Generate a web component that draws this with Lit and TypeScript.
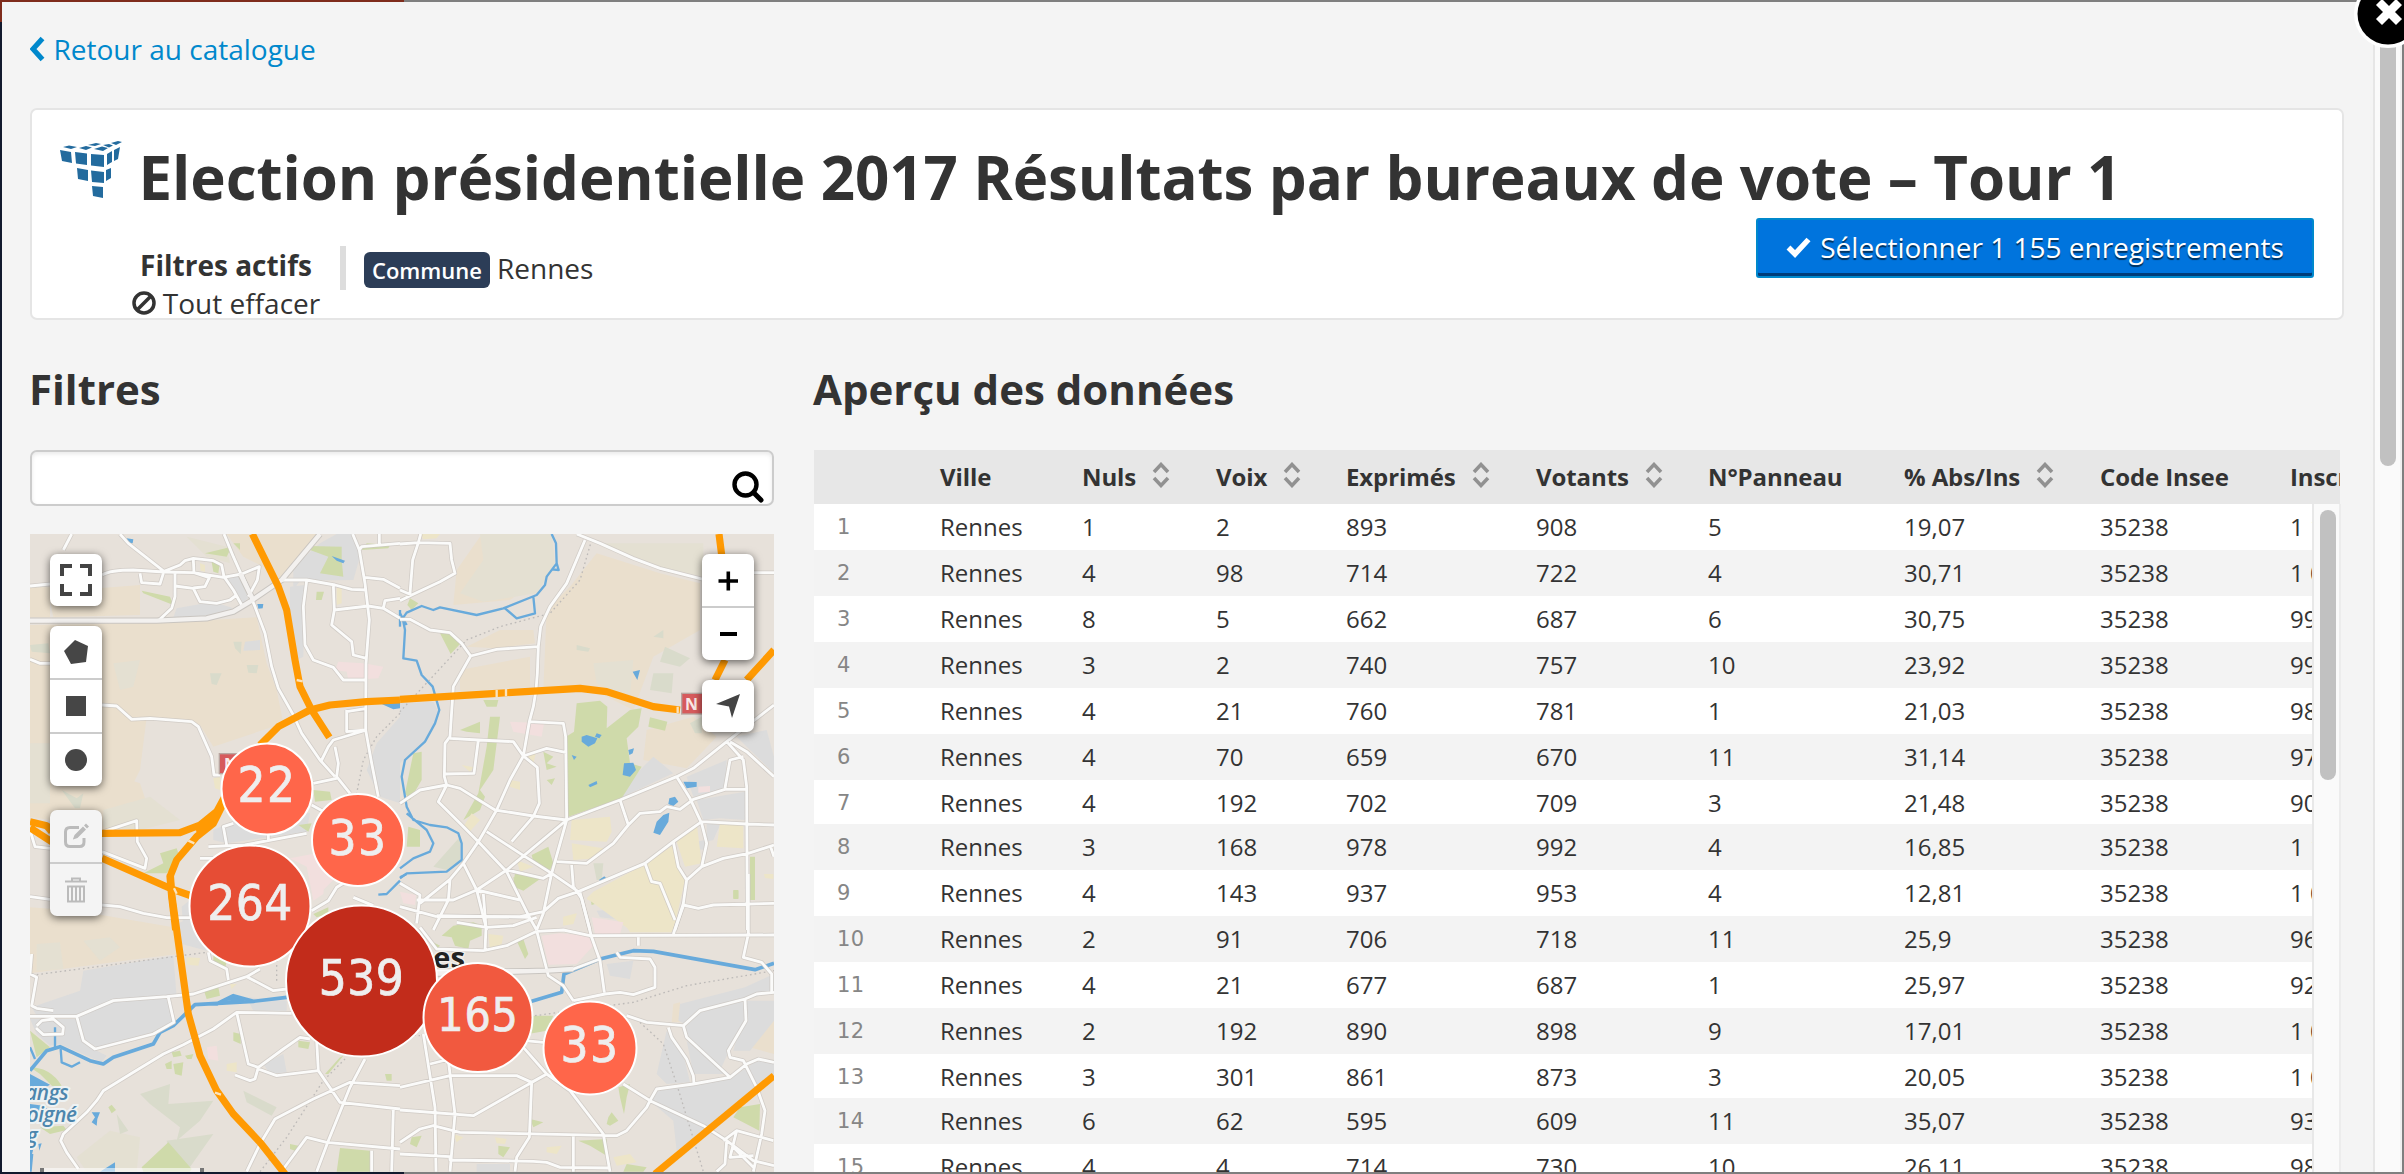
import { LitElement, html, svg, css } from "lit";
import { customElement } from "lit/decorators.js";

/* Map geometry is kept in four quadrants, drawn at three units per pixel. */
type Quad = [string, string, string, string];
const OFFSETS = ["translate(0 0)", "translate(1200 0)", "translate(0 1032)", "translate(1200 1032)"];

const ROADS: Quad = [
  `M215 12L190 60M360 12L385 40L492 124M90 168L150 162M306 135Q330 120 400 120L492 126L580 128L670 142L725 132L778 110L772 150L745 200
   M492 124L540 105L555 92L580 85L640 92L665 105L672 140L700 180L725 225M420 130L425 158L480 162L490 130M525 130V200L515 235L475 272
   M525 168L580 175L600 215L650 220L690 210L710 195M580 90L582 128L628 143L615 170L580 174
   M672 12L700 80L740 170L765 230L795 310L815 410L835 475L880 555L905 610L960 690L1005 740M725 132L760 215
   M845 150H920L1005 165L1055 178L1100 180M920 152L910 230L915 345L940 390L1000 412L1030 450L1100 450
   M1058 12L1078 60L1095 160L1108 270L1098 400L1097 600L1115 700L1135 800M1078 60L1085 50L1200 40M1095 142L1150 148L1200 175M1138 12V45
   M1000 165L1003 240L1105 228L1150 235L1200 265M1003 240L995 285L1055 335L1060 375L1100 385M1150 235L1155 212L1200 205
   M90 388L120 400H150M306 525L350 528L395 568L450 565L575 575L595 590L635 680L642 735H660
   M1040 540V605L1100 600M1040 545L1100 535M1100 600L1000 630L985 650L965 690M1005 650L1015 700L1010 740L1050 790M940 760L1010 745
   M935 825L980 850M310 905L410 872L412 935L440 985L435 1015L306 965M90 900L105 950L150 955M680 945L670 890L700 880
   M625 950L735 945L920 910M805 910V930M90 1100L150 1108M306 1125L360 1130L430 1150L500 1163H570M600 985H640`,
  `M0 42L55 38L150 40L155 90L165 130L120 155L35 195L0 212M62 12L55 38L38 90L30 190M0 180L35 195M530 12L600 40L700 85L780 115L910 148M1062 128H1122
   M555 30L500 160L450 230L422 290L415 350L412 430L408 480L400 530L388 575L370 678
   M0 268H30L90 300L150 308L185 340L212 378L160 470L150 620L135 640L133 740L140 765M212 378L290 358L415 350
   M150 625L235 630L340 635L370 678L330 750L290 840L235 935L190 1000L150 1048L60 1120M235 630L222 730L135 732
   M388 575L490 580L497 620L500 870M370 678L440 655L500 668M370 678L412 712L418 820L400 860L335 935
   M0 820L60 780L140 765L180 775L285 840L400 858L500 870M140 765L115 815L180 880L235 935L320 1025L390 1165L410 1200
   M500 870L660 810L830 740L880 715L980 635L1122 525M500 870L320 1020L230 1080L160 1110H50M500 870L455 1030L430 1150L410 1200
   M260 905L360 970L455 1030L535 1085L735 1000L820 935L905 875L1040 882L1122 885M660 810L685 885L640 940L560 1000L470 995
   M685 885L720 850L780 845L800 830L840 838L880 808L975 778H1040M830 740L870 805L905 880L920 940L905 1010L860 1050L850 1120L825 1200
   M820 935L835 1010L860 1050M905 1010L970 985L1045 970L1122 945M735 1000L755 1055L780 1060L825 1170
   M980 635L1030 690L1040 770L1042 1200M990 635L1040 665L1122 740M1030 680L990 690L975 775M850 1125L895 1135L940 1125L1122 1120
   M320 1020L430 1045L455 1030M515 1005L520 1070L545 1105L570 1200M535 1085L475 1105L430 1145L360 1160H110M190 1000L230 1080L260 1200
   M230 1080L360 1110M150 1048L145 1110L120 1160L100 1200M0 1060L60 1095L50 1180M0 1130L110 1160M1110 945L1122 980`,
  `M95 240L90 300L110 310L95 395L110 403L160 410M90 427H230L340 380L500 368L580 360L740 308L780 285M230 427L250 500L285 525L460 480L522 445L505 370
   M110 455L125 440L160 435L190 460L188 480L130 482L108 462M875 418L710 415L640 465L550 512L490 540L400 595L310 650L290 680L260 715L190 780L182 800L200 835L235 885
   M710 415L745 570L775 580L765 615L750 620L705 603M775 580L850 525L900 490L930 495M775 585L830 605L955 590L950 500M955 590L1020 685L1200 705
   M625 235L630 260L680 285L685 318M740 308L820 350L860 345M1095 555L1050 640L985 800L950 893
   M1200 635L1050 625L940 675L825 735L780 810L740 893M850 885L920 790L980 805L1200 825M1180 705L1175 893M1115 830V893
   M935 110L985 80L1010 40L1060 10M1060 70L1120 95`,
  `M0 640L150 605H350L395 625L440 600M70 480L105 700L108 893M120 460L145 560L165 720L150 893M90 570L150 555
   M0 708L220 725L440 600M395 625L388 790L350 850L345 893M370 520L440 600L510 650L610 780L630 893
   M0 805L60 765L100 755L180 775L650 785L680 770L740 700L750 680L770 645L880 630L990 610L1040 570L1075 555L1122 565
   M0 840L150 848L150 858L400 862L440 865L480 880L630 882M520 780V893M670 630L750 680L910 755L980 800L1060 860L1122 875
   M680 425L740 445L850 455L900 410L1035 375L1070 360L1122 355M850 455L860 490L990 610M805 460L815 490L860 555L880 605L882 630
   M1035 375L1038 440L985 530L990 550L1030 560L1070 640L1095 710L1085 780L1060 893M375 500L430 505
   M410 170L445 305L490 335L520 380M410 172L490 168L570 185L1122 183M540 55L575 190L600 260L613 355
   M520 380L615 360L660 355L700 362L765 340V280L750 255L660 250L650 235M715 190V215M1045 0V180L1030 250L1085 265L1115 300V355
   M250 60L258 160L255 230M110 125L390 130M170 145L260 160L340 155L410 130M60 160L110 225L250 230L320 215L410 172
   M110 290H440L520 285L600 255M850 95L820 180M970 800L1010 770L1120 800M1010 770L990 850L1060 845M980 800L975 870L950 893M1060 880L1000 820`,
];

const TRUNK: Quad = [
  `M90 272H470L620 265L700 245L750 215L845 150L960 12M757 205L720 130`,
  ``,
  ``,
  `M70 300L440 290L520 285`,
];

const MOTORWAY: Quad = [
  `M757 12L835 170L860 240L885 390L900 470L935 540L988 622M1200 510L1100 515L990 525L930 540L835 590L780 645
   M680 790L650 845L600 885L540 908L306 910M680 800L640 880L590 920L530 990L510 1040L515 1100L527 1200
   M90 875L140 887L155 905M90 893L155 935M306 985L510 1075L575 1098M650 850L595 910`,
  `M0 508L290 490L540 475L620 485L760 530L840 540M957 12L965 75M975 390L945 450M1122 360L1040 450`,
  `M511 0L515 60L540 240L565 420L600 545L650 650L700 720L780 805L855 900`,
  `M1122 605L765 900`,
];

const WATER_LINES: Quad = [
  `M1200 240V290`,
  `M455 12L468 40L470 100L440 140L435 165L410 195L310 235L230 255L120 232L100 240L65 228L20 248L8 265L15 300L10 385L50 392L65 435L98 470L118 540L105 580L75 635L15 690L5 740L20 830L40 870L90 885L140 892L175 910L185 940V990L140 1025L20 1030L0 1045
   M20 850L80 900L100 940L90 965L40 985L0 1015M400 200L405 250L350 265L315 235M470 100L476 120L455 118M0 250L20 285`,
  `M1200 20L1160 60L1135 62M182 525L185 565L215 578L240 565M165 460V520M90 520L105 555`,
  `M0 10L20 0M600 20L615 10`,
];

const CANALS: Quad = [
  ``,
  ``,
  `M860 370L760 382L585 392L520 455L480 475L460 510L340 550L310 570L270 560L180 518L140 530L90 590M650 390L700 365L760 382`,
  `M395 382L485 355L492 300L600 255L700 230L760 232L1065 287L1122 268`,
];

const LAKES: Quad = [
  `M380 25L400 28L398 40L385 38ZM772 222L790 222L788 235L775 236ZM995 78L1035 92L1030 100L1010 92ZM1145 522L1200 515V535L1180 538Z`,
  `M545 620L560 615L592 625L585 640L565 650L545 635ZM590 610L605 615L598 625L585 620ZM685 660L702 655L698 670L688 675ZM672 700L700 698L708 720L690 740L668 735ZM565 765L590 753L592 762L570 772ZM515 675L530 680L522 690ZM850 755L890 756V770L860 775ZM808 805L825 800L835 815L820 828L805 822ZM790 855L808 848L805 875L780 915L760 908L770 875ZM698 425L720 420L712 450L705 438ZM598 1050L615 1040L618 1045L602 1056Z`,
  `M90 600L150 632L120 650L90 645ZM275 715L300 715L292 735L290 755L275 745L285 730ZM90 800L100 825L90 865ZM115 810L125 808L118 830ZM345 865V893H300ZM90 840H100L95 893H90ZM660 380L700 362L740 382Z M90 690L130 695L150 710L90 715Z`,
  ``,
];

interface Area { fill: string; d: Quad }
const AREAS: Area[] = [
  { fill: "#eadfcd", d: [
    `M680 12H950L840 145L790 110L730 80ZM90 172H150V262H90ZM230 180L420 165L420 255L160 262L150 210ZM90 285L500 278L770 262L800 400L830 480L850 580L640 650L600 585L440 562L420 720L330 900L90 860ZM300 720L420 760L460 880L330 895Z`,
    `M240 20L450 30L440 130L330 210L160 225L170 120ZM590 70L780 130L900 160V300L760 380L700 540L560 470L430 480L440 240L510 170ZM740 600L880 560L950 620L860 715L730 690ZM200 350L300 300H400L405 340L290 355ZM180 420L390 380V470L180 485Z`,
    `M90 100L230 110L520 160L535 240L390 258L90 298Z`,
    `M820 390L840 385V445H815ZM1075 420L1122 415V540L1050 520Z`] },
  { fill: "#e4e0d2", d: [
    `M560 20L680 50L690 100L620 80ZM340 400L420 390L400 470L360 480Z M90 640H150V820H90ZM310 840L450 800L540 870L420 900L310 890Z`,
    `M240 12H455L465 100L410 190L250 215L180 190L250 90ZM600 40H910V140L780 110ZM580 400L700 390L690 500L590 460Z`,
    `M110 210L180 205L190 285L110 290ZM250 200L330 190L360 220L300 260ZM230 850L330 770L420 790L410 893H260Z`,
    ``] },
  { fill: "#d9dbcb", d: [
    `M630 430L665 430L650 465L635 462ZM740 405L775 405L770 430L745 428ZM90 345L145 340L150 370L95 365ZM700 335L725 335L722 372L705 355ZM185 780L230 805L250 790L240 835L225 835Z`,
    `M795 350L870 385L840 410L780 395ZM760 430L820 430L815 490L750 480ZM530 345L570 355L565 365L530 360ZM1000 250L1050 230L1040 290L1000 285ZM870 580L905 560V610L885 610ZM100 1010L180 920V990L140 1020ZM760 320L790 300V325ZM580 1000H610L605 1050H590Z`,
    `M420 660L510 630L505 690L640 680L600 740L530 800L540 760L450 690ZM730 650L830 700L815 725L740 685ZM350 720L385 770L360 780ZM500 800L640 780L560 893H520Z`,
    ``] },
  { fill: "#dcdcdc", d: [
    `M675 145L715 130L745 205L720 225ZM880 110L960 40L1010 12H1060L1080 80L1060 150L900 152L880 180ZM870 170L915 165L910 380L890 390L870 250ZM530 235L640 215L700 235L600 262L520 262ZM735 335L780 330V360L730 362ZM1130 640L1200 560V820L1140 800L1100 720ZM640 900L800 830L930 850L920 905L680 940L640 930ZM545 1130L570 1110V1200H550Z`,
    `M0 520L100 515L115 545L100 590L70 635L10 690L0 700ZM760 680L820 730L660 805L700 740ZM860 740L980 690L975 775L880 800ZM890 810L1035 785V870L960 865L910 870ZM1010 620L1100 600L1122 680V730L1050 660ZM920 880L960 885L940 930L920 935ZM865 940L915 930V960L870 955Z`,
    `M250 290L520 245L530 370L340 375L235 425L110 425L95 400L240 350ZM235 430L340 385L500 372L520 440L460 475L290 520L255 500ZM530 150L600 120L620 230L545 210ZM790 570L850 540L860 595L810 600ZM90 435H230L248 500L280 525L320 545L305 565L180 510L150 515L110 480ZM740 370L860 380V410H760Z`,
    `M840 390L1035 340L1122 300V355L1040 375L905 410L855 450L835 440ZM855 460L900 415L1035 380L1035 440L985 535L960 590L865 490ZM800 470L850 540L870 625L800 630L770 600ZM770 650L990 615L1070 560L1122 565V600L890 790L830 830L820 740L750 680ZM1040 380H1122V440L1050 530H1000ZM620 270L700 260L690 315L630 305ZM590 110L660 105L690 140L600 130ZM230 870H330V893H230ZM860 500L990 600H880Z`] },
  { fill: "#cfdaaa", d: [
    `M615 70L695 50L680 80ZM635 95H660L655 130L640 125ZM425 182L510 200L520 225L430 190ZM925 48L1025 50V90L1030 140L960 130L985 80L930 60ZM950 185H972L965 210H948ZM1085 60L1100 40L1170 45L1165 55ZM940 780L990 785L995 810L945 815ZM480 970L530 955L540 985L500 1030L430 1030L490 1000ZM895 885L935 880L925 905ZM700 40H720V60Z`,
    `M120 310L150 308L180 342L152 372ZM530 520L600 512L622 530L620 595L690 540L725 535L715 590L680 625L690 700L725 710L665 805L505 860L498 620L522 605ZM750 562L802 575L795 602L745 590ZM270 560H300L280 720L240 780L255 800L240 840L190 870L235 790L260 650ZM40 670L65 665V750L30 810L15 790ZM250 510H295L290 530H260ZM180 600L240 575V610L200 605ZM30 205L55 220L35 240L22 225ZM395 975L445 950L460 1000L450 1020L400 995ZM345 1030L420 1045L370 1080L340 1060ZM1050 980H1065V1110H1050ZM1000 1080H1015V1105H1000ZM25 890L60 900V950L20 950ZM570 1100L585 1095L592 1120L575 1125ZM600 1080L612 1078L620 1095L608 1100ZM430 665L460 680L440 700L470 710L440 720ZM440 750L465 745L455 765Z`,
    `M612 350L655 340L660 365L620 375ZM700 475L722 480V510L700 500ZM515 535L540 530L545 545L520 550ZM555 545L580 540L575 555L562 555ZM495 570L515 560V585L500 585ZM520 570L550 565L545 605L525 600ZM90 580Q150 580 185 635L160 640L120 600ZM505 805L575 885L570 893H430L425 880ZM90 470L150 520L110 550ZM1020 822L1110 830V893H1010ZM325 700L335 692L348 708L335 718ZM895 500L930 505L925 525L895 520ZM975 600L1020 550L1030 545L985 600ZM1155 600H1175V620H1160ZM640 240L680 260L675 285L640 265ZM940 120L985 100V120L950 130ZM870 810L895 815L885 830L870 825Z M120 760L190 755L200 768L150 780Z`,
    `M160 155L220 145L245 155V185L210 200L205 225L165 215L155 190L125 185ZM340 10L420 15L370 50L345 40ZM350 200L370 195L385 240L375 255ZM400 425L460 425L440 470L385 480ZM655 640L690 630L680 670L672 720L660 670ZM625 730L635 715L655 740L630 755L620 750ZM390 735L430 745L400 760ZM535 800L620 795V845L570 815ZM35 790L65 785L50 820L30 810ZM1020 700L1080 690L1078 770L1000 730ZM680 870L740 880L730 893H670ZM295 815L330 820L310 850L295 840ZM1050 0H1065V75H1050ZM1000 50H1015V75H1000ZM100 205L120 215L110 225Z`] },
  { fill: "#ede5c8", d: [
    `M1010 175L1025 172V220L1010 225ZM600 100L615 105V125L602 122ZM640 745L660 740V780L645 775Z`,
    `M60 12H120L110 25L70 28ZM515 870L630 860L635 905L620 935L510 930ZM515 940L580 950L610 955L590 985L520 990ZM740 1000L820 945L835 1015L855 1050L830 1160L820 1200H690L560 1105L580 1085ZM830 935L890 880L905 1000L855 1010ZM960 880L1030 885V955L950 950ZM330 750L360 755V780L330 770ZM350 990L400 1010L360 1025ZM215 850L240 870L205 910L190 890ZM185 705L220 712L210 725ZM490 1160L530 1150L520 1180L490 1185ZM380 675L410 660L400 700Z`,
    `M560 250L600 252L595 275L560 272ZM680 570L710 565V595L680 590ZM690 330H710L695 345Z`,
    `M560 75L730 5L745 25L780 30L825 140L815 175H690L650 110L570 80ZM265 180L310 185L305 210L270 230ZM490 130L530 120L520 150L490 155ZM640 850L690 840L710 865L650 875ZM440 820L485 815L470 840L440 835ZM285 790L320 795L315 810L290 808ZM160 780L190 790L170 805ZM1092 0H1120V15L1095 12Z`] },
  { fill: "#f2dfde", d: [
    `M1015 395L1090 400L1150 410L1135 445L1045 450L1040 425L1005 420ZM870 985L1000 960V1050L940 1110L920 1010Z`,
    `M330 575L432 580L425 620L340 605ZM895 770L930 768L930 785L895 788ZM0 1085L48 1095L45 1125L10 1120Z`,
    `M620 520L650 515L655 560L625 555ZM930 0H975L970 60L940 80Z`,
    `M425 185L480 178L565 185L580 215L530 270L445 272ZM575 130L670 145L660 180H585Z`] },
];

const RAILS: Quad = [
  `M1200 550L1130 620L1090 690L1070 790`,
  `M575 30L540 150L450 250L300 290L200 330L0 545M0 30`,
  `M110 302L390 265L620 235M830 320V260M780 893L860 790L970 620L1040 550`,
  `M405 425L700 385L860 335L1122 290M720 445L790 510L830 630L910 893M0 480L60 485`,
];

interface Cluster { x: number; y: number; r: number; n: string; c: string; size: number; dy: number; sp: number }
const CLUSTERS: Cluster[] = [
  { x: 267, y: 789, r: 46.5, n: "22", c: "#ff664a", size: 49, dy: -4.500, sp: 1.4 },
  { x: 358, y: 840, r: 47, n: "33", c: "#ff664a", size: 49, dy: -3, sp: 1.4 },
  { x: 250, y: 906, r: 61.5, n: "264", c: "#e64d35", size: 49, dy: -3.500, sp: 0.4 },
  { x: 361.5, y: 981, r: 76.5, n: "539", c: "#c22c1b", size: 49, dy: -3.500, sp: 0.4 },
  { x: 478, y: 1017.5, r: 55.5, n: "165", c: "#f1593f", size: 46, dy: -3, sp: 0.8 },
  { x: 590, y: 1048, r: 47.5, n: "33", c: "#ff664a", size: 49, dy: -3.500, sp: 1.4 },
];

const quad = (d: Quad, cls: string, fill?: string) =>
  d.map((p, i) => (p ? svg`<path class=${cls} transform=${OFFSETS[i]} fill=${fill ?? "none"} d=${p}></path>` : null));

@customElement("geo-map")
class GeoMap extends LitElement {
  static styles = css`
    :host { display: block; position: relative; height: 638px; overflow: hidden; background: #e7e1da; }
    .canvas { display: block; width: 744px; height: 638px; }
    .casing, .road, .trunk, .trunk-casing, .motor, .river, .canal, .rail { stroke-linejoin: round; }
    .casing { stroke: #cbc6c0; stroke-width: 13; opacity: .8; }
    .road { stroke: #fbfbfa; stroke-width: 8.5; }
    .trunk-casing { stroke: #c9c5c0; stroke-width: 19; }
    .trunk { stroke: #f3f1ef; stroke-width: 13; }
    .motor { stroke: #ff9a03; stroke-width: 21.5; }
    .river { stroke: #68aadb; stroke-width: 7; }
    .canal { stroke: #68aadb; stroke-width: 11; }
    .rail { stroke: #bdbab8; stroke-width: 4; stroke-dasharray: 5 9; }
    .city { font: 700 88px "Open Sans", sans-serif; fill: #222; stroke: #f2efec; stroke-width: 8; paint-order: stroke; }
    .lake { font: italic 600 62px "Open Sans", sans-serif; letter-spacing: -1px; fill: #4d86ad; stroke: #eef2f3; stroke-width: 12; paint-order: stroke; }
    .shield { font: 700 48px "Open Sans", sans-serif; fill: #f9e9e6; }
    .count { font-family: "DejaVu Sans Condensed", "DejaVu Sans", sans-serif; font-stretch: condensed; fill: #eee; stroke: #eee; stroke-width: .7; text-anchor: middle; }
    .bar { position: absolute; width: 52px; border-radius: 7px; background: #fff; box-shadow: 0 2px 9px rgba(0,0,0,.6); overflow: hidden; }
    .bar svg { display: block; width: 52px; height: 52px; }
    .bar svg + svg { border-top: 2px solid #ccc; }
    .full { left: 20px; top: 20px; }
    .draw { left: 20px; top: 92px; }
    .edit { left: 20px; top: 276px; background: #f4f4f4; }
    .zoom { left: 672px; top: 20px; }
    .locate { left: 672px; top: 146px; }
    .scale { position: absolute; left: 10px; top: 634px; width: 156px; height: 20px; border: 4px solid #777; border-top: 0; background: rgba(255,255,255,.55); }
  `;
  render() {
    return html`
      <svg class="canvas" viewBox="90 12 2232 1914">
        ${AREAS.map((a) => quad(a.d, "area", a.fill))}
        ${quad(LAKES, "lakes", "#68aadb")}
        ${quad(WATER_LINES, "river")} ${quad(CANALS, "canal")} ${quad(RAILS, "rail")}
        ${quad(ROADS, "casing")} ${quad(TRUNK, "trunk-casing")}
        ${quad(ROADS, "road")} ${quad(TRUNK, "trunk")} ${quad(MOTORWAY, "motor")}
        <rect x="2045" y="490" width="64" height="62" fill="#d65a5c" stroke="#b9a5a0" stroke-width="4"></rect>
        <text class="shield" x="2055" y="540">N</text>
        <rect x="658" y="671" width="64" height="60" fill="#d65a5c" stroke="#b9a5a0" stroke-width="4"></rect>
        <text class="shield" x="672" y="719">N</text>
        <path d="M890 450l18 4M565 932l18 8M522 1075l8 16M645 1688l18 6M1490 479v22M1518 477v22M2033 530v20" stroke="#fbe3bd" stroke-width="7"></path>
        <text class="city" x="1395" y="1315" text-anchor="end">es</text>
        <text class="lake" x="205" y="1711" text-anchor="end">angs</text>
        <text class="lake" x="230" y="1777" text-anchor="end">oigné</text>
        <text class="lake" x="112" y="1839" text-anchor="end">g</text>
        <g transform="translate(0 -1590) scale(3)">
          ${CLUSTERS.map((k) => svg`
            <circle cx=${k.x} cy=${k.y} r=${k.r - 1} fill=${k.c} stroke="#fff" stroke-width="2"></circle>
            <text class="count" x=${k.x} y=${k.y + k.dy + k.size * 0.365} font-size=${k.size} letter-spacing=${k.sp}>${k.n}</text>`)}
        </g>
      </svg>
      <div class="bar full"><svg viewBox="0 0 52 52"><path d="M12 22V12H22M30 12H40V22M40 30V40H30M22 40H12V30" fill="none" stroke="#444" stroke-width="4"></path></svg></div>
      <div class="bar draw">
        <svg viewBox="0 0 52 52"><path d="M25 14L38 20L36 36L21 38L14 25Z" fill="#464646"></path></svg>
        <svg viewBox="0 0 52 52"><path d="M16 16H36V36H16Z" fill="#464646"></path></svg>
        <svg viewBox="0 0 52 52"><circle cx="26" cy="26" r="11" fill="#464646"></circle></svg>
      </div>
      <div class="bar edit">
        <svg viewBox="0 0 52 52"><path d="M29 17.500H20Q15.500 17.500 15.500 22V32Q15.500 36.500 20 36.500H29.500Q34 36.500 34 32V28" fill="none" stroke="#bbb" stroke-width="3"></path><path d="M23 29L24.500 25L33 16.500L36 19.500L27.500 28L23 29.500ZM34 15.500L36 13.500L39 16.500L37 18.500Z" fill="#bbb"></path></svg>
        <svg viewBox="0 0 52 52"><path d="M15 17.500H37M22 17V14.500H30V17M18 22.500H34V37.500H18ZM22 22V38M26 22V38M30 22V38" fill="none" stroke="#bbb" stroke-width="2"></path></svg>
      </div>
      <div class="bar zoom">
        <svg viewBox="0 0 52 52"><path d="M16.500 27H36M26.300 17.500V36.500" stroke="#000" stroke-width="3.600"></path></svg>
        <svg viewBox="0 0 52 52"><path d="M18 26H35" stroke="#000" stroke-width="4"></path></svg>
      </div>
      <div class="bar locate"><svg viewBox="0 0 52 52"><path d="M38 14L30 38L27 26.500L14 24Z" fill="#444"></path></svg></div>
      <div class="scale"></div>`;
  }
}

const COLUMNS: { label: string; sort?: boolean }[] = [
  { label: "Ville" }, { label: "Nuls", sort: true }, { label: "Voix", sort: true }, { label: "Exprimés", sort: true },
  { label: "Votants", sort: true }, { label: "N°Panneau" }, { label: "% Abs/Ins", sort: true }, { label: "Code Insee" }, { label: "Inscrits" },
];
const ROWS: string[][] = [
  ["1", "2", "893", "908", "5", "19,07", "1 122"],
  ["4", "98", "714", "722", "4", "30,71", "1 042"],
  ["8", "5", "662", "687", "6", "30,75", "992"],
  ["3", "2", "740", "757", "10", "23,92", "995"],
  ["4", "21", "760", "781", "1", "21,03", "989"],
  ["4", "70", "659", "670", "11", "31,14", "973"],
  ["4", "192", "702", "709", "3", "21,48", "903"],
  ["3", "168", "978", "992", "4", "16,85", "1 193"],
  ["4", "143", "937", "953", "4", "12,81", "1 093"],
  ["2", "91", "706", "718", "11", "25,9", "969"],
  ["4", "21", "677", "687", "1", "25,97", "928"],
  ["2", "192", "890", "898", "9", "17,01", "1 082"],
  ["3", "301", "861", "873", "3", "20,05", "1 092"],
  ["6", "62", "595", "609", "11", "35,07", "938"],
  ["4", "4", "714", "730", "10", "26,11", "988"],
];

@customElement("data-table")
class DataTable extends LitElement {
  static styles = css`
    :host { display: block; width: 1527px; font-size: 24px; color: #333; }
    .head, .row { display: grid; grid-template-columns: 103px 142px 134px 130px 190px 172px 196px 196px 190px 160px; padding-left: 23px; white-space: nowrap; }
    .head { box-sizing: border-box; width: 1526px; height: 54px; background: #e7e7e7; font-weight: 700; line-height: 54px; letter-spacing: -.1px; overflow: hidden; }
    .cell { display: flex; gap: 16px; }
    .sort { width: 18px; height: 26px; margin-top: 12px; flex: none; }
    .body { display: flex; height: 668px; }
    .rows { width: 1498px; overflow: hidden; background: #fff; }
    .row { height: 46px; line-height: 46px; }
    .row:nth-child(7), .row:nth-child(13) { height: 44px; }
    .row:nth-child(even) { background: #f3f3f3; }
    .num { font: 21px/47px "DejaVu Sans", sans-serif; letter-spacing: .3px; color: #868686; }
    .track { box-sizing: border-box; width: 29px; padding: 6px 4px 0 6px; background: #fafafa; border-left: 2px solid #e8e8e8; border-right: 2px solid #ececec; }
    .thumb { width: 16px; height: 270px; border-radius: 8px; background: #c1c1c1; }
  `;
  render() {
    return html`
      <div class="head"><span></span>${COLUMNS.map((c) => html`<span class="cell">${c.label}
        ${c.sort ? html`<svg class="sort" viewBox="0 0 18 26"><path d="M2 10L9 2.500L16 10M2 16L9 23.500L16 16" fill="none" stroke="#919191" stroke-width="3.500"></path></svg>` : null}</span>`)}</div>
      <div class="body">
        <div class="rows">${ROWS.map((r, i) => html`<div class="row"><span class="num">${i + 1}</span><span>Rennes</span>
          ${r.slice(0, 6).map((v) => html`<span>${v}</span>`)}<span>35238</span><span>${r[6]}</span></div>`)}</div>
        <div class="track"><div class="thumb"></div></div>
      </div>`;
  }
}

@customElement("app-root")
class AppRoot extends LitElement {
  static styles = css`
    :host { display: block; position: relative; box-sizing: border-box; width: 2404px; height: 1174px; padding: 2px; overflow: hidden;
      font-family: "Open Sans", sans-serif; font-size: 28px; color: #333;
      background: linear-gradient(#7f2c1c, #7f2c1c) 0 0 / 404px 22px no-repeat, linear-gradient(#121a2e, #121a2e) 0 0 / 404px 1174px no-repeat, #7f7f7f; }
    .panel { display: flex; height: 1170px; background: #f4f4f4; overflow: hidden; }
    .content { box-sizing: border-box; flex: none; width: 2371px; padding: 27px 29px 0 28px; }
    .back { display: flex; align-items: center; gap: 8.500px; height: 40px; line-height: 40px; color: #0088cc; text-decoration: none; }
    .back svg { width: 15px; height: 26px; }
    .card { box-sizing: border-box; display: flex; height: 212px; margin-top: 39px; padding: 27px 28px 0; background: #fff; border: 2px solid #e5e5e5; border-radius: 7px; }
    .logo { flex: none; width: 62px; height: 60px; margin-top: 4px; }
    .info { flex: 1; padding-left: 10px; }
    h1 { margin: 0 0 0 6.500px; font-size: 60px; line-height: 80px; font-weight: 700; letter-spacing: -.07px; white-space: nowrap; }
    .actions { display: flex; justify-content: space-between; align-items: flex-start; }
    .filters { display: flex; margin-top: 29px; line-height: 38px; }
    .active { width: 188px; display: flex; flex-direction: column; align-items: center; white-space: nowrap; }
    .clear { display: flex; align-items: center; gap: 7px; }
    .clear svg { width: 24px; height: 24px; }
    .rule { width: 6px; height: 44px; margin-left: 20px; background: #ddd; }
    .tag { display: flex; gap: 7px; margin: 3px 0 0 18px; }
    .badge { height: 36px; margin-top: 3px; padding: 0 8px; border-radius: 6px; background: #2c3d57; color: #fff; font-size: 22px; font-weight: 600; line-height: 37px; }
    .select { box-sizing: border-box; display: flex; justify-content: center; align-items: center; gap: 9px; width: 558px; height: 60px; margin-top: 1px; padding: 0 0 2px; border: 2px solid #0088cc; border-radius: 3px;
      background: #0074dd; box-shadow: inset 0 -3px #003d7a; color: #fff; font: inherit; text-shadow: 0 2px 1px rgba(0,0,0,.6); white-space: nowrap; }
    .select svg { width: 25px; height: 22px; }
    .columns { display: flex; gap: 40px; }
    .side { flex: none; width: 744px; }
    h2 { margin: 40px 0 33px -1px; font-size: 42px; line-height: 57px; font-weight: 700; }
    .search { box-sizing: border-box; display: flex; justify-content: flex-end; height: 56px; margin-bottom: 28px; padding: 19px 8px 0; border: 2px solid #ccc; border-radius: 7px; background: #fff; box-shadow: inset 0 2px 4px rgba(0,0,0,.09); }
    .search svg { width: 32px; height: 32px; }
    .track { box-sizing: border-box; flex: none; width: 29px; padding-left: 5px; background: #fafafa; border-left: 2px solid #e6e6e6; border-right: 2px solid #f0f0f0; }
    .thumb { width: 16px; height: 464px; border-radius: 8px; background: #c1c1c1; }
    .close { position: absolute; left: 2354px; top: -20px; width: 68px; height: 68px; }
  `;
  render() {
    return html`
      <div class="panel">
        <div class="content">
          <a class="back"><svg viewBox="0 0 15 26"><path d="M12.500 2.500L3 13L12.500 23.500" fill="none" stroke="#0088cc" stroke-width="5.200"></path></svg>Retour au catalogue</a>
          <div class="card">
            <svg class="logo" viewBox="0 0 62 60" fill="#236b9e">
              <path d="M0 9L11 11L12 22L2 20ZM15 11L27 12.500V24L16 22.500ZM31 13L44 14V26L31 24.500ZM47 13L52 10V21L47 24ZM54 9L60 6L58 18L54 20ZM17 27L28 29V40L18 38ZM31 29.500L44 31V42L32 41ZM46 29L51 27V37L46 40ZM32 45L43 46V57L33 55ZM3 6L9 4.500L17 6L11 8ZM19 7L26 5L32 6.500L26 9ZM34 8L42 5.500L48 7L43 10ZM28 4L36 2L41 3L35 5ZM43 4L49 3L53 4.500L49 6.500ZM51 2L58 0L62 1L56 4Z"></path>
            </svg>
            <div class="info">
              <h1>Election présidentielle 2017 Résultats par bureaux de vote – Tour 1</h1>
              <div class="actions">
                <div class="filters">
                  <div class="active"><b>Filtres actifs</b>
                    <span class="clear"><svg viewBox="0 0 24 24"><circle cx="12" cy="12" r="10" fill="none" stroke="#333" stroke-width="3.500"></circle><path d="M5.500 18.500L18.500 5.500" stroke="#333" stroke-width="3.500"></path></svg>Tout effacer</span>
                  </div>
                  <div class="rule"></div>
                  <div class="tag"><span class="badge">Commune</span><span>Rennes</span></div>
                </div>
                <button class="select"><svg viewBox="0 0 25 22"><path d="M2.500 11.500L9 18L22.500 3.500" fill="none" stroke="#fff" stroke-width="5.500"></path></svg>Sélectionner 1 155 enregistrements</button>
              </div>
            </div>
          </div>
          <div class="columns">
            <div class="side">
              <h2>Filtres</h2>
              <div class="search"><svg viewBox="0 0 32 32"><circle cx="13.500" cy="13.500" r="11" fill="none" stroke="#000" stroke-width="4.400"></circle><path d="M21.500 21.500L29 29" stroke="#000" stroke-width="5" stroke-linecap="round"></path></svg></div>
              <geo-map></geo-map>
            </div>
            <div>
              <h2>Aperçu des données</h2>
              <data-table></data-table>
            </div>
          </div>
        </div>
        <div class="track"><div class="thumb"></div></div>
      </div>
      <svg class="close" viewBox="0 0 68 68"><circle cx="34" cy="34" r="34" fill="#fff"></circle><circle cx="34" cy="34" r="30.500" fill="#000"></circle>
        <path d="M25 22L45 42M45 22L25 42" stroke="#fff" stroke-width="8.500"></path></svg>`;
  }
}
